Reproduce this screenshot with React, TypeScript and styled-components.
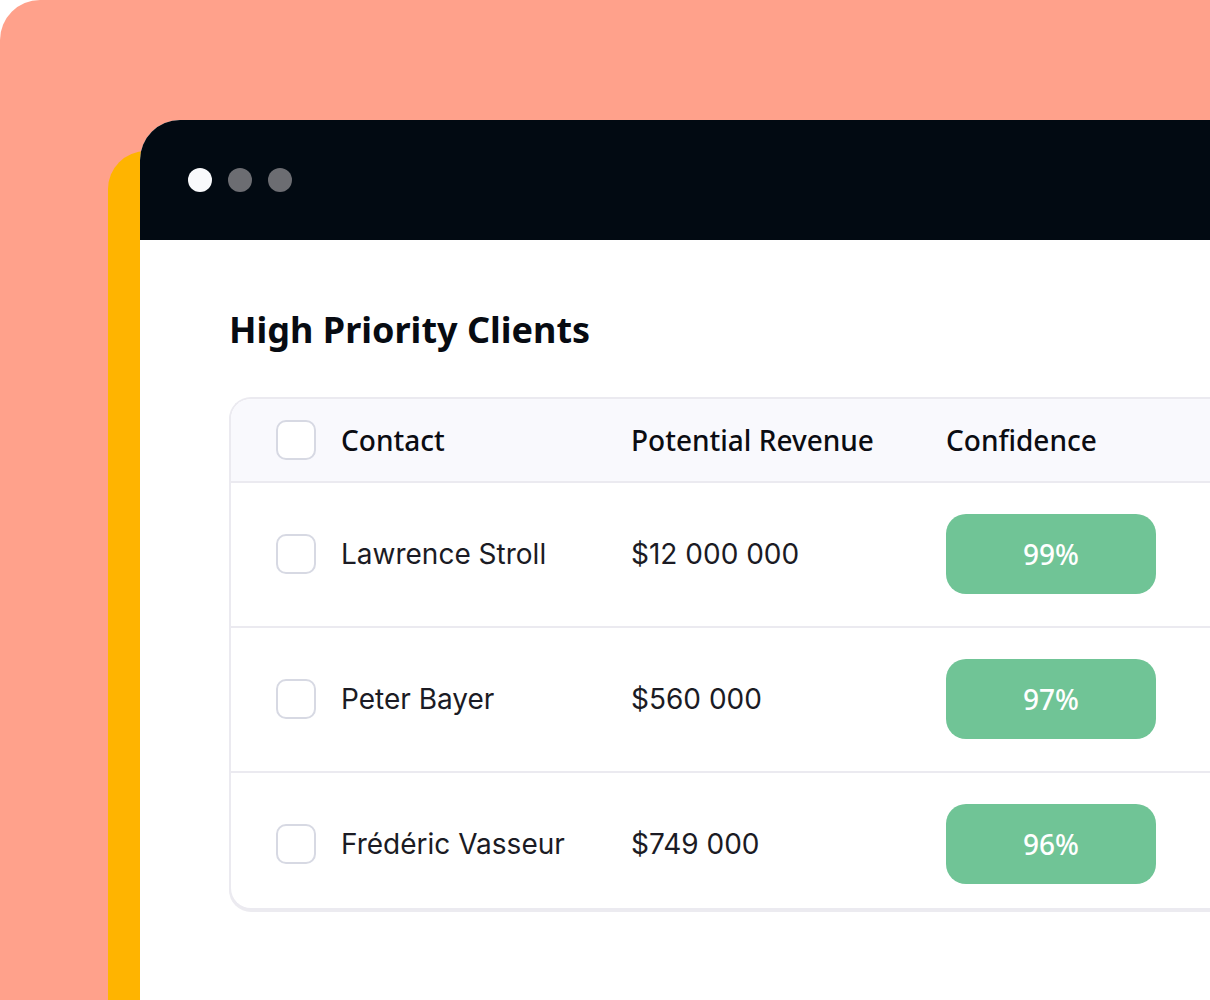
import styled, { createGlobalStyle } from 'styled-components';

const GlobalStyle = createGlobalStyle`
  html, body {
    margin: 0;
    padding: 0;
    background: #ffffff;
  }
  body {
    font-family: "Noto Sans", "Open Sans", sans-serif;
  }
`;

type Client = {
  name: string;
  revenue: string;
  confidence: number;
};

const clients: Client[] = [
  { name: 'Lawrence Stroll', revenue: '$12 000 000', confidence: 99 },
  { name: 'Peter Bayer', revenue: '$560 000', confidence: 97 },
  { name: 'Frédéric Vasseur', revenue: '$749 000', confidence: 96 },
];

export default function App() {
  return (
    <>
      <GlobalStyle />
      <Backdrop>
        <Frame>
          <Window>
            <TitleBar>
              <Dot active />
              <Dot />
              <Dot />
            </TitleBar>
            <Content>
              <Heading>High Priority Clients</Heading>
              <Table>
                <HeaderRow>
                  <Checkbox />
                  <HeadCell>Contact</HeadCell>
                  <HeadCell>Potential Revenue</HeadCell>
                  <HeadCell>Confidence</HeadCell>
                </HeaderRow>
                {clients.map((c, i) => (
                  <Row key={c.name} last={i === clients.length - 1}>
                    <Checkbox />
                    <Cell>{c.name}</Cell>
                    <Cell>{c.revenue}</Cell>
                    <Pill>{c.confidence}%</Pill>
                  </Row>
                ))}
              </Table>
            </Content>
          </Window>
        </Frame>
      </Backdrop>
    </>
  );
}

const Backdrop = styled.div`
  width: 1210px;
  height: 1000px;
  background: #ffa18b;
  border-top-left-radius: 40px;
  padding: 120px 0 0 140px;
  box-sizing: border-box;
  display: flex;
  overflow: hidden;
`;

const Frame = styled.div`
  position: relative;
  flex: 1;
  display: flex;

  &::before {
    content: '';
    position: absolute;
    left: -32px;
    top: 31px;
    bottom: 0;
    width: 120px;
    background: #ffb400;
    border-top-left-radius: 38px;
  }
`;

const Window = styled.div`
  position: relative;
  z-index: 1;
  flex: 1;
  display: flex;
  flex-direction: column;
  background: #ffffff;
  border-top-left-radius: 40px;
  overflow: hidden;
`;

const TitleBar = styled.div`
  height: 120px;
  flex-shrink: 0;
  background: #020a12;
  display: flex;
  align-items: center;
  gap: 16px;
  padding-left: 48px;
`;

const Dot = styled.span<{ active?: boolean }>`
  width: 24px;
  height: 24px;
  border-radius: 50%;
  background: ${(p) => (p.active ? '#f9fafc' : '#6c6d72')};
`;

const Content = styled.div`
  padding: 68px 0 0 89px;
`;

const Heading = styled.h1`
  margin: 0 0 45px 0;
  font-family: "Noto Sans", sans-serif;
  font-size: 36px;
  line-height: 44px;
  font-weight: 700;
  color: #070b12;
`;

const Table = styled.div`
  width: 1100px;
  border: 2px solid #ebeaf0;
  border-right: none;
  border-radius: 22px 0 0 22px;
  box-shadow: 0 2px 0 #ecebf0;
  overflow: hidden;
  background: #fff;
`;

const gridCols = `
  display: grid;
  grid-template-columns: 40px 265px 290px 1fr;
  column-gap: 25px;
  align-items: center;
  padding-left: 45px;
`;

const HeaderRow = styled.div`
  ${gridCols}
  height: 82px;
  background: #f9f9fd;
  border-bottom: 2px solid #ebeaf0;
`;

const HeadCell = styled.div`
  font-family: "Noto Sans", sans-serif;
  font-size: 28px;
  font-weight: 500;
  color: #0b0c12;
`;

const Row = styled.div<{ last?: boolean }>`
  ${gridCols}
  padding-top: 31px;
  padding-bottom: ${(p) => (p.last ? '24px' : '32px')};
  border-bottom: ${(p) => (p.last ? 'none' : '2px solid #ebeaf0')};
`;

const Cell = styled.div`
  font-family: Inter, sans-serif;
  font-size: 28px;
  color: #1b1b24;
`;

const Checkbox = styled.span`
  width: 40px;
  height: 40px;
  box-sizing: border-box;
  border: 2px solid #d7d9e3;
  border-radius: 10px;
  background: #fff;
`;

const Pill = styled.div`
  width: 210px;
  height: 80px;
  border-radius: 20px;
  background: #70c496;
  color: #ffffff;
  font-family: "Noto Sans", sans-serif;
  font-size: 28px;
  font-weight: 500;
  display: flex;
  align-items: center;
  justify-content: center;
`;
